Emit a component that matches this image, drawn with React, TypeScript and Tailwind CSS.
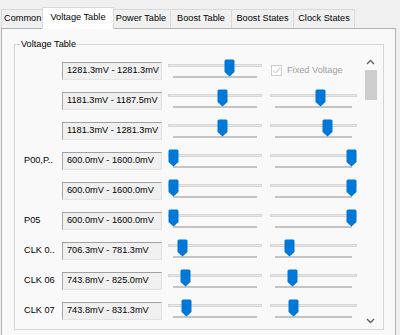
import React from "react";

type Row = {
  label: string;
  range: string;
  a: number;
  b: number | null;
};

const rows: Row[] = [
  { label: "", range: "1281.3mV - 1281.3mV", a: 61.5, b: null },
  { label: "", range: "1181.3mV - 1187.5mV", a: 54, b: 50.5 },
  { label: "", range: "1181.3mV - 1281.3mV", a: 54, b: 57 },
  { label: "P00,P..", range: "600.0mV - 1600.0mV", a: 5.5, b: 81.5 },
  { label: "", range: "600.0mV - 1600.0mV", a: 5.5, b: 81.5 },
  { label: "P05", range: "600.0mV - 1600.0mV", a: 5.5, b: 81.5 },
  { label: "CLK 0..", range: "706.3mV - 781.3mV", a: 14, b: 19.5 },
  { label: "CLK 06", range: "743.8mV - 825.0mV", a: 17, b: 22 },
  { label: "CLK 07", range: "743.8mV - 831.3mV", a: 18, b: 23 },
];

const tabs = [
  { name: "Common", w: "w-[43px] justify-start pl-[2px]" },
  { name: "Voltage Table", w: "w-[72px]" },
  { name: "Power Table", w: "w-[59px] justify-center" },
  { name: "Boost Table", w: "w-[61px] justify-center" },
  { name: "Boost States", w: "w-[62px] justify-center" },
  { name: "Clock States", w: "w-[61px] justify-center" },
];

function Thumb({ pos }: { pos: number }) {
  return (
    <svg
      width="11"
      height="18"
      viewBox="0 0 11 18"
      className="absolute top-[3px]"
      style={{ left: pos - 5.5 }}
    >
      <path
        d="M0.5 2 Q0.5 0.5 2 0.5 H9 Q10.5 0.5 10.5 2 V13 L5.5 17.5 L0.5 13 Z"
        fill="#0078d7"
      />
    </svg>
  );
}

function Slider({ pos, width }: { pos: number; width: string }) {
  return (
    <div className={`relative h-[30px] shrink-0 ${width}`}>
      <div className="absolute left-0 right-0 top-[8px] h-[3px] border border-[#d6d6d6] bg-[#e7e7e7]" />
      <div className="absolute left-[5px] right-[5px] top-[20px] h-[2px] bg-[#c4c4c4]" />
      <Thumb pos={pos} />
    </div>
  );
}

function FixedVoltage() {
  return (
    <div className="w-[87px] h-[30px] shrink-0 flex items-start pt-[9px] pl-[1px] gap-[5px]">
      <div className="w-[11px] h-[11px] border border-[#cccccc] bg-white flex items-center justify-center">
        <svg width="9" height="9" viewBox="0 0 9 9">
          <path d="M1 4.5 L3.5 7 L8 1.5" fill="none" stroke="#bdbdbd" strokeWidth="1" />
        </svg>
      </div>
      <span className="text-[9.2px] leading-[11px] text-[#a0a0a0]">Fixed Voltage</span>
    </div>
  );
}

export default function App() {
  return (
    <div className="w-[400px] h-[335px] overflow-hidden bg-[#f0f0f0] text-black font-['Liberation_Sans',Arial,sans-serif] text-[9.2px]">
      {/* tab strip */}
      <div className="h-[28px] flex items-end pl-[1px]">
        {tabs.map((t, i) =>
          i === 1 ? (
            <div
              key={t.name}
              className="relative z-10 -mx-[2px] h-[22px] -mb-[1px] w-[72px] border border-b-0 border-[#d9d9d9] bg-white flex items-center justify-center pb-[2px] whitespace-nowrap"
            >
              {t.name}
            </div>
          ) : (
            <div
              key={t.name}
              className={`h-[19px] ${t.w} border border-b-0 border-l-0 first:border-l border-[#d9d9d9] bg-[#f0f0f0] flex items-center whitespace-nowrap`}
            >
              {t.name}
            </div>
          )
        )}
      </div>

      {/* tab page */}
      <div className="ml-[1px] w-[395px] h-[310px] border border-[#b2b2b2] border-b-0 bg-[#f9f9f9] pl-[12px]">
        <div className="relative mt-[15px] w-[370px] h-[286px] border border-[#d5d5d5]">
          <span className="absolute left-[5px] -top-[7px] px-[1px] bg-[#f9f9f9] leading-[12px]">
            Voltage Table
          </span>

          <div className="mt-[8px] h-[276px] flex">
            <div className="w-[347px] h-full overflow-hidden pt-[3px]">
              {rows.map((r, i) => (
                <div key={i} className="h-[30px] flex items-center">
                  <div className="w-[47px] shrink-0 pl-[9px] whitespace-nowrap">{r.label}</div>
                  <div className="w-[100px] h-[18px] shrink-0 bg-[#f0f0f0] border border-t-[#a0a0a0] border-l-[#a8a8a8] border-r-[#e3e3e3] border-b-[#e3e3e3] flex items-center pl-[4px] whitespace-nowrap">
                    {r.range}
                  </div>
                  <div className="ml-[6px] flex">
                    <Slider pos={r.a} width="w-[94px]" />
                    <div className="ml-[8px]">
                      {r.b === null ? <FixedVoltage /> : <Slider pos={r.b} width="w-[87px]" />}
                    </div>
                  </div>
                </div>
              ))}
            </div>

            {/* scrollbar */}
            <div className="w-[17px] h-full flex flex-col items-center">
              <div className="h-[17px] w-full flex items-center justify-center">
                <svg width="9" height="6" viewBox="0 0 9 6">
                  <path d="M1 5 L4.5 1.5 L8 5" fill="none" stroke="#606060" strokeWidth="1.4" />
                </svg>
              </div>
              <div className="w-[12px] h-[30px] bg-[#cdcdcd]" />
              <div className="flex-1" />
              <div className="h-[17px] w-full flex items-center justify-center">
                <svg width="9" height="6" viewBox="0 0 9 6">
                  <path d="M1 1 L4.5 4.5 L8 1" fill="none" stroke="#606060" strokeWidth="1.4" />
                </svg>
              </div>
            </div>
          </div>
        </div>
      </div>
    </div>
  );
}
